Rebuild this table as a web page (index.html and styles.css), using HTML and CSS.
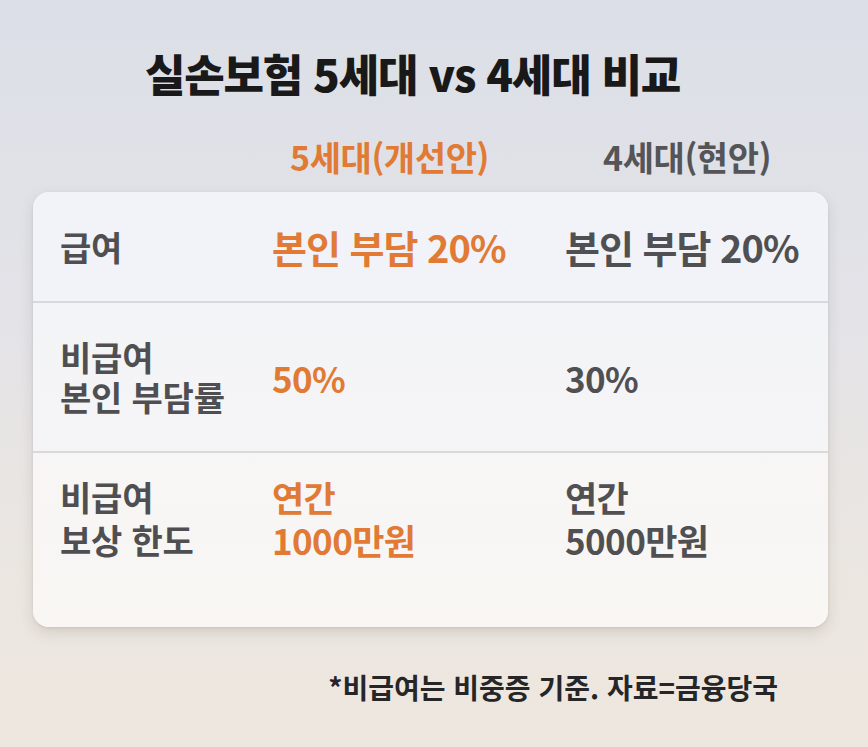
FILE: index.html
```html
<!DOCTYPE html>
<html lang="ko">
<head>
<meta charset="utf-8">
<link rel="stylesheet" href="styles.css">
</head>
<body>
<main class="page">
  <h1 class="title">실손보험 5세대 vs 4세대 비교</h1>
  <div class="heads">
    <span class="head head-new">5세대(개선안)</span>
    <span class="head head-old">4세대(현안)</span>
  </div>
  <section class="card">
    <div class="row row1">
      <div class="label">급여</div>
      <div class="val new big">본인 부담 20%</div>
      <div class="val old big">본인 부담 20%</div>
    </div>
    <div class="row row2">
      <div class="label">비급여<br>본인 부담률</div>
      <div class="val new">50%</div>
      <div class="val old">30%</div>
    </div>
    <div class="row row3">
      <div class="label">비급여<br>보상 한도</div>
      <div class="val new">연간<br>1000만원</div>
      <div class="val old">연간<br>5000만원</div>
    </div>
  </section>
  <p class="note">*비급여는 비중증 기준. 자료=금융당국</p>
</main>
</body>
</html>
```

FILE: styles.css
```css
* { box-sizing: border-box; }
html, body { margin: 0; padding: 0; }
body {
  width: 868px;
  height: 747px;
  overflow: hidden;
  font-family: "Noto Sans CJK KR", "Noto Sans", sans-serif;
  background: linear-gradient(180deg, #dcdfe7 0%, #e3e3e8 40%, #ebe6e1 75%, #eee7df 100%);
  color: #222;
}
.page {
  display: flex;
  flex-direction: column;
  padding: 47px 40px 0 33px;
}
.title {
  margin: 0;
  font-size: 44px;
  line-height: 52px;
  font-weight: 900;
  color: #19191a;
  text-align: center;
  padding-right: 36px;
  letter-spacing: -1.2px;
}
.heads {
  display: grid;
  grid-template-columns: 239px 293px 1fr;
  margin-top: 38px;
  height: 55px;
}
.head {
  font-size: 34px;
  line-height: 40px;
  font-weight: 700;
  letter-spacing: -0.4px;
}
.head-new { grid-column: 2; color: #e07a34; padding-left: 18px; }
.head-old { grid-column: 3; color: #555557; padding-left: 38px; }
.card {
  width: 795px;
  border-radius: 16px;
  overflow: hidden;
  box-shadow: 0 6px 14px rgba(90, 80, 70, 0.16), 0 1px 3px rgba(0,0,0,0.08);
  background: #f6f5f5;
}
.row {
  display: grid;
  grid-template-columns: 212px 293px 1fr;
  align-items: center;
  padding-left: 27px;
}
.row1 { height: 111px; background: #f1f3f8; border-bottom: 2px solid #d8d9de; }
.row2 { height: 150px; background: linear-gradient(180deg, #f3f4f7, #f5f5f6); border-bottom: 2px solid #d9d8dc; }
.row3 { height: 174px; align-items: start; padding-top: 22px; background: linear-gradient(180deg, #f7f6f6, #f9f6f3); }
.label {
  font-size: 34px;
  line-height: 40px;
  font-weight: 700;
  color: #4f4f52;
  letter-spacing: -0.2px;
}
.row3 .label { line-height: 43px; }
.val {
  font-size: 35px;
  line-height: 43px;
  font-weight: 700;
  letter-spacing: -0.6px;
}
.val.big { font-size: 38px; letter-spacing: -1px; }
.new { color: #e07a34; }
.old { color: #505053; }
.note {
  margin: 42px 50px 0 0;
  text-align: right;
  font-size: 28px;
  line-height: 36px;
  font-weight: 700;
  color: #262628;
  letter-spacing: 0;
}
```
